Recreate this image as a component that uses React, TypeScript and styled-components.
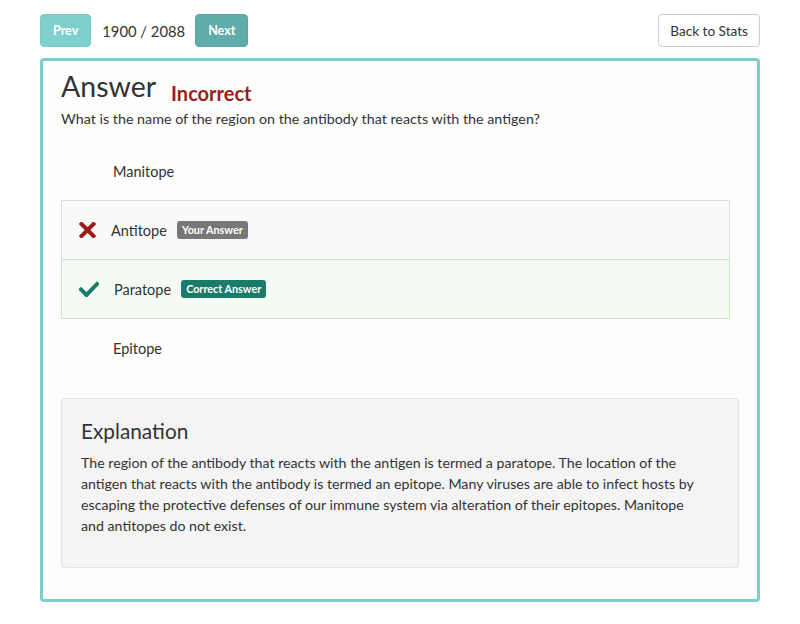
import styled, { createGlobalStyle } from "styled-components";

const GlobalStyle = createGlobalStyle`
    body {
        margin: 0;
        background: #ffffff;
        font-family: Lato, "Open Sans", sans-serif;
        color: #333333;
    }
`;

const Page = styled.div`
    padding: 14px 40px 24px;
`;

const Toolbar = styled.div`
    display: flex;
    align-items: center;
    height: 33px;
`;

const NavButton = styled.button<{ $dark?: boolean }>`
    height: 33px;
    padding: 0 12px;
    border: 1px solid ${p => (p.$dark ? "#56a7a3" : "#79c9c6")};
    border-radius: 4px;
    background: ${p => (p.$dark ? "#5fadaa" : "#7fcfcc")};
    color: #ffffff;
    font-family: inherit;
    font-size: 12.5px;
    font-weight: 700;
`;

const Counter = styled.span`
    margin: 0 10px 0 11px;
    font-size: 14.8px;
    color: #333;
`;

const BackButton = styled.button`
    margin-left: auto;
    height: 33px;
    padding: 0 11px;
    border: 1px solid #cccccc;
    border-radius: 4px;
    background: #ffffff;
    color: #333;
    font-family: inherit;
    font-size: 13.6px;
`;

const Card = styled.section`
    margin-top: 11px;
    border: 3px solid #7ecfcc;
    border-radius: 4px;
    background: #fdfdfc;
    padding: 7px 18px 31px;
`;

const TitleRow = styled.div`
    display: flex;
    align-items: baseline;
`;

const Title = styled.h1`
    margin: 0;
    font-size: 28.5px;
    font-weight: 400;
    line-height: 36px;
    color: #333;
`;

const Verdict = styled.span`
    margin-left: 15px;
    font-size: 20px;
    font-weight: 700;
    color: #9b1c1c;
    position: relative;
    top: 4px;
`;

const Question = styled.p`
    margin: 5px 0 12px;
    font-size: 14.3px;
    line-height: 20px;
`;

const Options = styled.ul`
    list-style: none;
    margin: 0 9px 20px 0;
    padding: 0;
`;

const Option = styled.li<{ $state?: "wrong" | "right" }>`
    display: flex;
    align-items: center;
    gap: 15px;
    height: 58px;
    padding-left: 17px;
    border: 1px solid
        ${p => (p.$state === "wrong" ? "#dddddd" : p.$state === "right" ? "#cce5c6" : "transparent")};
    background: ${p => (p.$state === "wrong" ? "#fafafc" : p.$state === "right" ? "#f5fbf3" : "transparent")};
    & + & {
        margin-top: ${p => (p.$state === "right" ? "-1px" : "0")};
    }
    font-size: 14.5px;
`;

const IconSlot = styled.span`
    display: flex;
    &:empty {
        width: 19px;
    }
`;

const Label = styled.span`
    color: #333;
`;

const Badge = styled.span<{ $tone: "gray" | "green" }>`
    margin-left: -5px;
    padding: 2px 5px 3px;
    border-radius: 3px;
    background: ${p => (p.$tone === "gray" ? "#777777" : "#1b7b6b")};
    color: #fff;
    font-size: 10.8px;
    font-weight: 700;
    line-height: 13px;
`;

const Explanation = styled.div`
    background: #f4f4f4;
    border: 1px solid #e3e3e3;
    border-radius: 4px;
    padding: 19px 19px 31px;
`;

const ExplanationTitle = styled.h2`
    margin: 0 0 8px;
    font-size: 20.8px;
    font-weight: 400;
    line-height: 26px;
    color: #333;
`;

const ExplanationText = styled.p`
    margin: 0;
    font-size: 14.2px;
    line-height: 21px;
    color: #333;
`;

const Cross = () => (
    <svg width="17" height="16" viewBox="0 0 17 16">
        <path d="M2.5 2 L14.5 14 M14.5 2 L2.5 14" stroke="#9b1c1c" strokeWidth="4" strokeLinecap="square" />
    </svg>
);

const Check = () => (
    <svg width="20" height="16" viewBox="0 0 20 16">
        <path d="M2 8.5 L7.5 14 L18 3" fill="none" stroke="#1b7b6b" strokeWidth="4" strokeLinecap="square" />
    </svg>
);

export default function App() {
    return (
        <Page>
            <GlobalStyle />
            <Toolbar>
                <NavButton>Prev</NavButton>
                <Counter>1900 / 2088</Counter>
                <NavButton $dark>Next</NavButton>
                <BackButton>Back to Stats</BackButton>
            </Toolbar>
            <Card>
                <TitleRow>
                    <Title>Answer</Title>
                    <Verdict>Incorrect</Verdict>
                </TitleRow>
                <Question>What is the name of the region on the antibody that reacts with the antigen?</Question>
                <Options>
                    <Option>
                        <IconSlot />
                        <Label>Manitope</Label>
                    </Option>
                    <Option $state="wrong">
                        <IconSlot><Cross /></IconSlot>
                        <Label>Antitope</Label>
                        <Badge $tone="gray">Your Answer</Badge>
                    </Option>
                    <Option $state="right">
                        <IconSlot><Check /></IconSlot>
                        <Label>Paratope</Label>
                        <Badge $tone="green">Correct Answer</Badge>
                    </Option>
                    <Option>
                        <IconSlot />
                        <Label>Epitope</Label>
                    </Option>
                </Options>
                <Explanation>
                    <ExplanationTitle>Explanation</ExplanationTitle>
                    <ExplanationText>
                        The region of the antibody that reacts with the antigen is termed a paratope. The location of the
                        <br />
                        antigen that reacts with the antibody is termed an epitope. Many viruses are able to infect hosts by
                        <br />
                        escaping the protective defenses of our immune system via alteration of their epitopes. Manitope
                        <br />
                        and antitopes do not exist.
                    </ExplanationText>
                </Explanation>
            </Card>
        </Page>
    );
}
